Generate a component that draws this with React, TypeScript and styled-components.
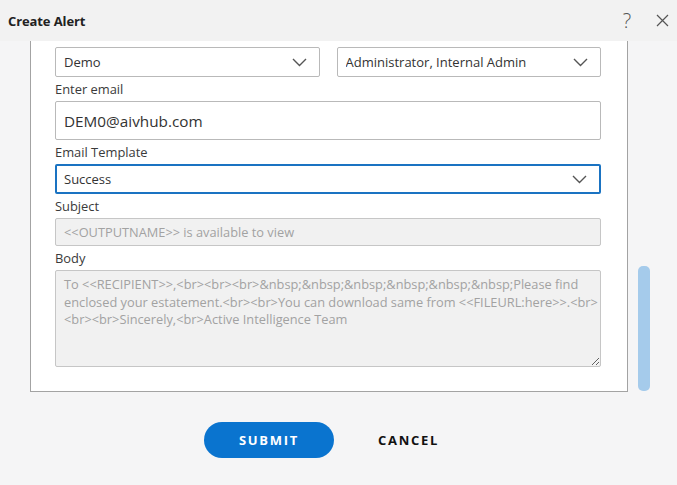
import React from "react";
import styled, { createGlobalStyle } from "styled-components";

const Global = createGlobalStyle`
  html, body { margin: 0; padding: 0; }
  body {
    background: #f4f4f4;
    font-family: "Open Sans", "Noto Sans", sans-serif;
    color: #333;
  }
  * { box-sizing: border-box; }
`;

const Dialog = styled.div`
  width: 677px;
  height: 485px;
  display: flex;
  flex-direction: column;
  background: #f5f5f6;
  overflow: hidden;
`;

const Header = styled.header`
  height: 41px;
  display: flex;
  align-items: center;
  gap: 5px;
  padding: 0 0 0 8px;
  background: #f2f2f2;
`;

const Title = styled.h1`
  flex: 1;
  margin: 0;
  font-size: 13px;
  font-weight: 700;
  color: #222;
  letter-spacing: -0.1px;
`;

const HeaderIcon = styled.button`
  width: 30px;
  height: 26px;
  border: none;
  background: none;
  padding: 0;
  display: flex;
  align-items: center;
  justify-content: center;
  color: #555;
  font-family: "Open Sans", sans-serif;
  font-size: 20px;
  font-weight: 300;
  cursor: pointer;
`;

const Body = styled.div`
  display: flex;
  align-items: stretch;
  height: 351px;
  padding-left: 30px;
`;

const Panel = styled.section`
  width: 598px;
  background: #fff;
  border: 1px solid #a3a3a3;
  border-top: none;
  padding: 6px 26px 0 24px;
  display: flex;
  flex-direction: column;
`;

const ScrollTrack = styled.div`
  width: 22px;
  padding: 225px 0 1px 10px;
  display: flex;
`;

const ScrollThumb = styled.div`
  width: 9px;
  flex: 1;
  border-radius: 5px;
  background: #a5cbeb;
`;

const Row = styled.div`
  display: grid;
  grid-template-columns: 1fr 1fr;
  gap: 17px;
`;

const Label = styled.label`
  display: block;
  font-size: 12.9px;
  line-height: 18px;
  color: #3a3a3a;
  margin: 3px 0 3px;
`;

const SelectBox = styled.div<{ $focused?: boolean }>`
  height: 30px;
  display: flex;
  align-items: center;
  padding: 0 12px 0 ${(p) => (p.$focused ? "7px" : "8px")};
  border: ${(p) => (p.$focused ? "2px solid #1a73c2" : "1px solid #b9b9b9")};
  border-radius: 2px;
  background: #fff;
  font-size: 13px;
  color: #333;
`;

const SelectText = styled.span`
  flex: 1;
  white-space: nowrap;
  overflow: hidden;
`;

const Chevron = () => (
  <svg width="15" height="9" viewBox="0 0 15 9" fill="none">
    <path d="M1 1l6.5 6.5L14 1" stroke="#555" strokeWidth="1.4" />
  </svg>
);

const EmailInput = styled.input`
  width: 100%;
  height: 39px;
  border: 1px solid #b9b9b9;
  border-radius: 2px;
  padding: 0 8px;
  font-family: "Open Sans", sans-serif;
  font-size: 15.3px;
  color: #333;
  outline: none;
`;

const DisabledInput = styled.input`
  width: 100%;
  height: 28px;
  border: 1px solid #c6c6c6;
  border-radius: 2px;
  padding: 0 8px;
  background: #f1f1f1;
  font-family: "Open Sans", sans-serif;
  font-size: 12.8px;
  color: #a2a2a2;
  outline: none;
`;

const BodyArea = styled.textarea`
  width: 100%;
  height: 97px;
  border: 1px solid #c6c6c6;
  border-radius: 2px;
  padding: 5px 1px 5px 8px;
  background: #f1f1f1;
  font-family: "Open Sans", sans-serif;
  font-size: 12.8px;
  line-height: 17.5px;
  color: #a2a2a2;
  resize: vertical;
  outline: none;
`;

const Footer = styled.footer`
  flex: 1;
  display: flex;
  align-items: center;
  padding: 2px 0 0 204px;
  gap: 28px;
`;

const SubmitButton = styled.button`
  width: 130px;
  height: 36px;
  border: none;
  border-radius: 18px;
  background: #0a74cf;
  color: #fff;
  font-family: "Open Sans", sans-serif;
  font-size: 13px;
  font-weight: 700;
  letter-spacing: 1.7px;
  cursor: pointer;
`;

const CancelButton = styled.button`
  height: 36px;
  padding: 0 16px;
  border: none;
  background: none;
  color: #111;
  font-family: "Open Sans", sans-serif;
  font-size: 13px;
  font-weight: 700;
  letter-spacing: 1.7px;
  cursor: pointer;
`;

const bodyText =
  "To <<RECIPIENT>>,<br><br><br>&nbsp;&nbsp;&nbsp;&nbsp;&nbsp;&nbsp;Please find enclosed your estatement.<br><br>You can download same from <<FILEURL:here>>.<br><br><br>Sincerely,<br>Active Intelligence Team";

export default function App() {
  return (
    <>
      <Global />
      <Dialog>
        <Header>
          <Title>Create Alert</Title>
          <HeaderIcon aria-label="Help">?</HeaderIcon>
          <HeaderIcon aria-label="Close">
            <svg width="13" height="13" viewBox="0 0 13 13">
              <path d="M1 1l11 11M12 1L1 12" stroke="#555" strokeWidth="1.2" />
            </svg>
          </HeaderIcon>
        </Header>
        <Body>
          <Panel>
            <Row>
              <SelectBox>
                <SelectText>Demo</SelectText>
                <Chevron />
              </SelectBox>
              <SelectBox>
                <SelectText>Administrator, Internal Admin</SelectText>
                <Chevron />
              </SelectBox>
            </Row>
            <Label>Enter email</Label>
            <EmailInput defaultValue="DEM0@aivhub.com" />
            <Label>Email Template</Label>
            <SelectBox $focused>
              <SelectText>Success</SelectText>
              <Chevron />
            </SelectBox>
            <Label>Subject</Label>
            <DisabledInput readOnly value="<<OUTPUTNAME>> is available to view" />
            <Label>Body</Label>
            <BodyArea readOnly value={bodyText} />
          </Panel>
          <ScrollTrack>
            <ScrollThumb />
          </ScrollTrack>
        </Body>
        <Footer>
          <SubmitButton>SUBMIT</SubmitButton>
          <CancelButton>CANCEL</CancelButton>
        </Footer>
      </Dialog>
    </>
  );
}
